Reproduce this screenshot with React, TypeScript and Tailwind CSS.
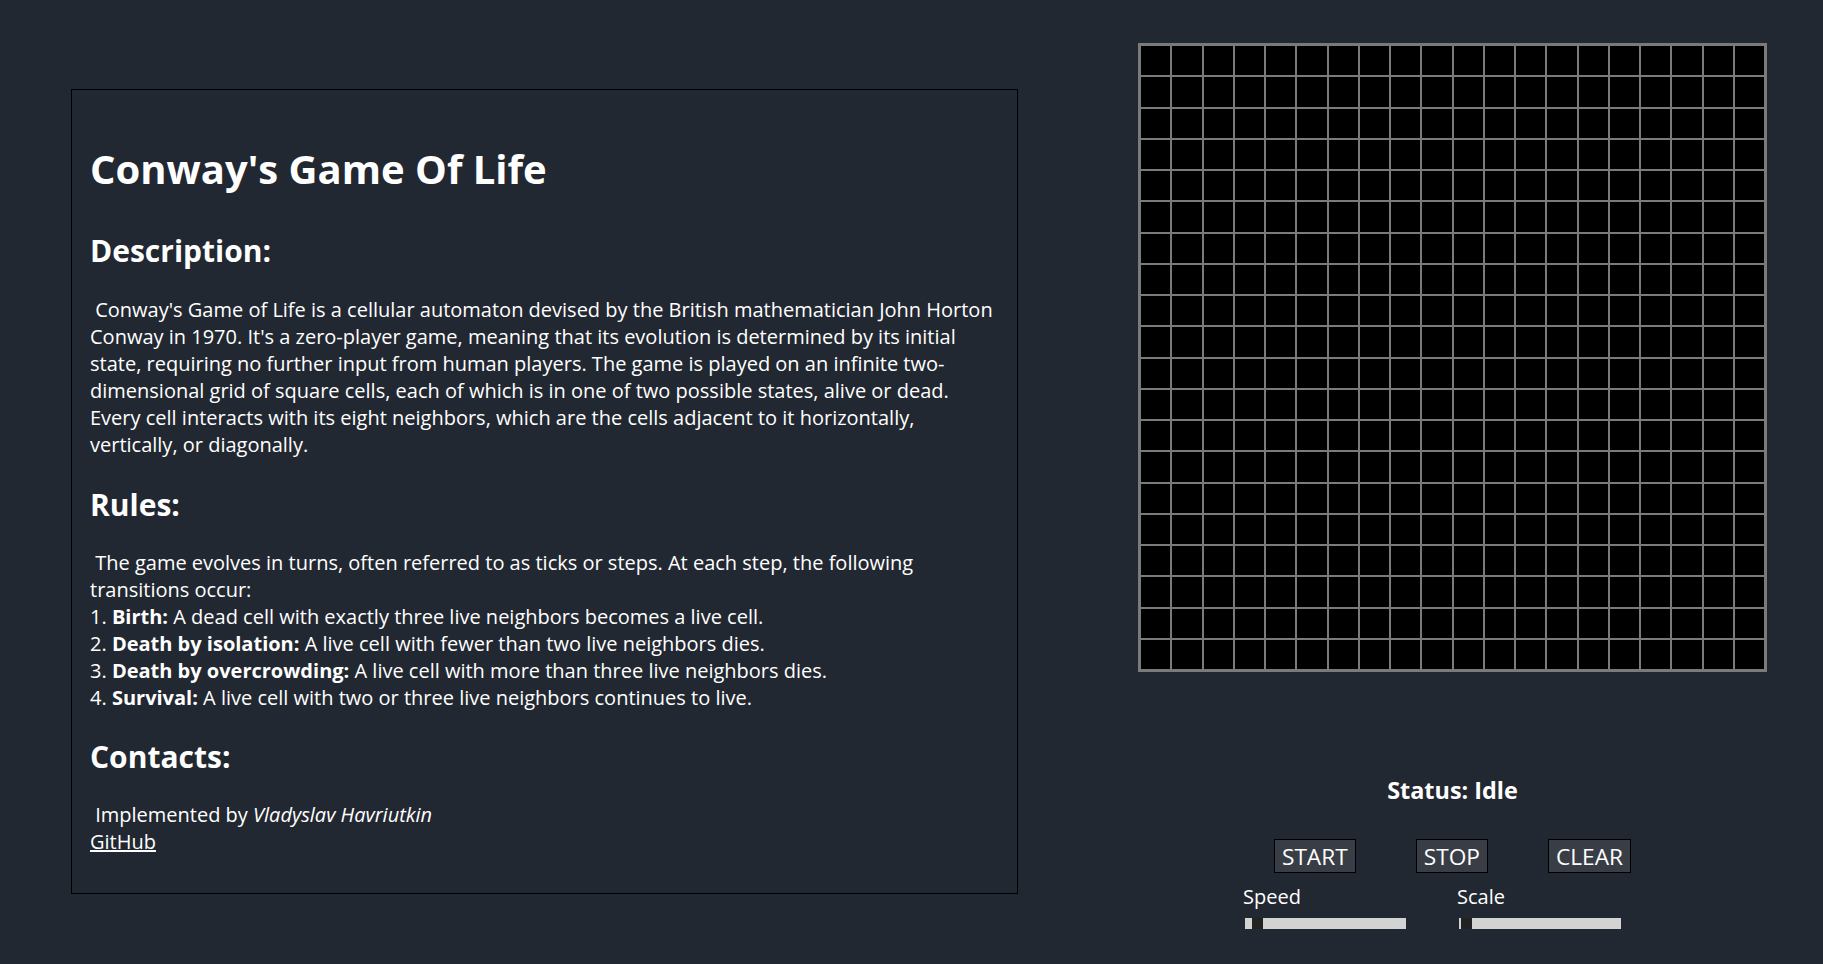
import { useState } from 'react'

const SIZE = 20

const rules = [
  { title: 'Birth:', text: 'A dead cell with exactly three live neighbors becomes a live cell.' },
  { title: 'Death by isolation:', text: 'A live cell with fewer than two live neighbors dies.' },
  { title: 'Death by overcrowding:', text: 'A live cell with more than three live neighbors dies.' },
  { title: 'Survival:', text: 'A live cell with two or three live neighbors continues to live.' }
]

export default function App() {
  const [cells, setCells] = useState<boolean[]>(() => Array(SIZE * SIZE).fill(false))
  const [status, setStatus] = useState('Idle')

  const toggleCell = (index: number) => {
    setCells(prev => prev.map((alive, i) => (i === index ? !alive : alive)))
  }

  return (
    <div className="min-h-screen bg-[#222831] text-white font-['Open_Sans',sans-serif]">
      <div className="flex items-start pl-[71px]">
        {/* Info panel */}
        <div className="mt-[89px] w-[947px] h-[805px] border border-black px-[18px] pt-[55px]">
          <h1 className="text-[40px] leading-[48px] font-bold">Conway's Game Of Life</h1>

          <h2 className="mt-[40px] text-[30px] leading-[36px] font-bold">Description:</h2>
          <p className="mt-[27px] text-[20px] leading-[27px]">
            &nbsp;Conway's Game of Life is a cellular automaton devised by the British mathematician John Horton
            Conway in 1970. It's a zero-player game, meaning that its evolution is determined by its initial
            state, requiring no further input from human players. The game is played on an infinite
            two-dimensional grid of square cells, each of which is in one of two possible states, alive or
            dead. Every cell interacts with its eight neighbors, which are the cells adjacent to it
            horizontally, vertically, or diagonally.
          </p>

          <h2 className="mt-[29px] text-[30px] leading-[36px] font-bold">Rules:</h2>
          <p className="mt-[26px] text-[20px] leading-[27px]">
            &nbsp;The game evolves in turns, often referred to as ticks or steps. At each step, the following
            transitions occur:
            {rules.map((rule, i) => (
              <span key={rule.title}>
                <br />
                {i + 1}. <b>{rule.title}</b> {rule.text}
              </span>
            ))}
          </p>

          <h2 className="mt-[28px] text-[30px] leading-[36px] font-bold">Contacts:</h2>
          <p className="mt-[26px] text-[20px] leading-[27px]">
            &nbsp;Implemented by <i>Vladyslav Havriutkin</i>
            <br />
            <a href="#" className="underline">GitHub</a>
          </p>
        </div>

        {/* Game */}
        <div className="ml-[120px] mt-[43px] w-[629px] flex flex-col items-center">
          <div className="w-[629px] h-[629px] bg-[#7a7a7a] p-[3px] grid grid-cols-[repeat(20,minmax(0,1fr))] grid-rows-[repeat(20,minmax(0,1fr))] gap-[2px]">
            {cells.map((alive, i) => (
              <div
                key={i}
                onClick={() => toggleCell(i)}
                className={alive ? 'bg-[#00adb5]' : 'bg-black'}
              />
            ))}
          </div>

          <div className="mt-[103px] text-[23.4px] leading-[30px] font-bold">Status: {status}</div>

          <div className="mt-[34px] flex gap-[60px]">
            <button
              onClick={() => setStatus('Running')}
              className="h-[34px] px-[7px] pt-[1px] flex items-center bg-[#393e46] border border-black text-[22.7px] leading-[30px]"
            >
              START
            </button>
            <button
              onClick={() => setStatus('Idle')}
              className="h-[34px] px-[7px] pt-[1px] flex items-center bg-[#393e46] border border-black text-[22.7px] leading-[30px]"
            >
              STOP
            </button>
            <button
              onClick={() => {
                setCells(Array(SIZE * SIZE).fill(false))
                setStatus('Idle')
              }}
              className="h-[34px] px-[7px] pt-[1px] flex items-center bg-[#393e46] border border-black text-[22.7px] leading-[30px]"
            >
              CLEAR
            </button>
          </div>

          <div className="self-start ml-[107px] mt-[11px] flex gap-[53px]">
            <div className="w-[161px]">
              <div className="-ml-[2px] text-[20px] leading-[26px]">Speed</div>
              <div className="mt-[8px] h-[11px] bg-[#d3d3d3]">
                <div className="ml-[7px] w-[11px] h-full bg-[#222222]" />
              </div>
            </div>
            <div className="w-[162px]">
              <div className="-ml-[2px] text-[20px] leading-[26px]">Scale</div>
              <div className="mt-[8px] h-[11px] bg-[#d3d3d3]">
                <div className="ml-[2px] w-[11px] h-full bg-[#222222]" />
              </div>
            </div>
          </div>
        </div>
      </div>
    </div>
  )
}
